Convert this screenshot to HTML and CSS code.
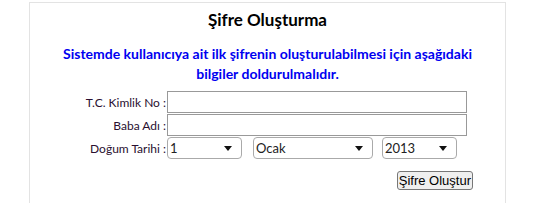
FILE: index.html
```html
<!DOCTYPE html>
<html lang="tr">
<head>
  <meta charset="UTF-8" />
  <title>Şifre Oluşturma</title>
  <link rel="stylesheet" href="styles.css">
</head>
<body>
  <div class="panel">
    <h2 class="title">Şifre Oluşturma</h2>
    <p class="info">Sistemde kullanıcıya ait ilk şifrenin oluşturulabilmesi için aşağıdaki bilgiler doldurulmalıdır.</p>

    <div class="form">
      <label class="lbl" for="tc">T.C. Kimlik No :</label>
      <input class="txt" type="text" id="tc">

      <label class="lbl" for="baba">Baba Adı :</label>
      <input class="txt" type="text" id="baba">

      <label class="lbl">Doğum Tarihi :</label>
      <div class="dates">
        <span class="drop day"><select class="sel"><option>1</option><option>2</option></select></span>
        <span class="drop month"><select class="sel"><option>Ocak</option><option>Şubat</option></select></span>
        <span class="drop year"><select class="sel"><option>2013</option><option>2012</option></select></span>
      </div>
    </div>

    <div class="actions">
      <button class="btn">Şifre Oluştur</button>
    </div>
  </div>
</body>
</html>
```

FILE: styles.css
```css
body {
  margin: 0;
  background-color: #fff;
  font-family: Lato, "Open Sans", sans-serif;
  color: #222;
}
.panel {
  margin: 2px 0 0 29px;
  width: 475px;
  height: 200px;
  border: 1px solid #e3e3e3;
  border-bottom: none;
}
.title {
  margin: 6px 0 0;
  text-align: center;
  font-size: 17px;
  font-weight: bold;
  color: #000;
  line-height: 22px;
}
.info {
  margin: 13px 20px 0;
  text-align: center;
  font-size: 14px;
  font-weight: bold;
  color: #0000f0;
  line-height: 20px;
}
.form {
  display: grid;
  grid-template-columns: 137px auto;
  row-gap: 1px;
  margin-top: 7px;
  align-items: center;
}
.lbl {
  text-align: right;
  font-size: 12px;
  color: #2a1030;
  padding-right: 1px;
}
.txt {
  width: 300px;
  height: 22px;
  box-sizing: border-box;
  border: 1px solid #999;
  margin: 0;
  padding: 1px 3px;
}
.dates {
  display: flex;
  gap: 11px;
}
.drop {
  position: relative;
  display: block;
}
/* filled arrow like the old windows dropdown */
.drop::after {
  content: "";
  position: absolute;
  right: 10px;
  top: 9px;
  border-left: 4px solid transparent;
  border-right: 4px solid transparent;
  border-top: 5px solid #111;
  pointer-events: none;
}
.sel {
  -webkit-appearance: none;
  appearance: none;
  width: 100%;
  height: 22px;
  box-sizing: border-box;
  border: 1px solid #aaa;
  border-radius: 4px;
  background-color: #fff;
  font-family: Lato, sans-serif;
  font-size: 13px;
  color: #222;
  margin: 0;
  padding: 0 2px;
}
.day { width: 75px; }
.month { width: 120px; }
.year { width: 75px; margin-left: -2px; }
.actions {
  display: flex;
  justify-content: flex-end;
  margin: 12px 32px 0 0;
}
.btn {
  font-family: "Liberation Sans", Arial, sans-serif;
  font-size: 13px;
  height: 19px;
  padding: 0 1px;
  border: 1px solid #777;
  border-radius: 3px;
  background-color: #efefef;
  color: #000;
}
```
